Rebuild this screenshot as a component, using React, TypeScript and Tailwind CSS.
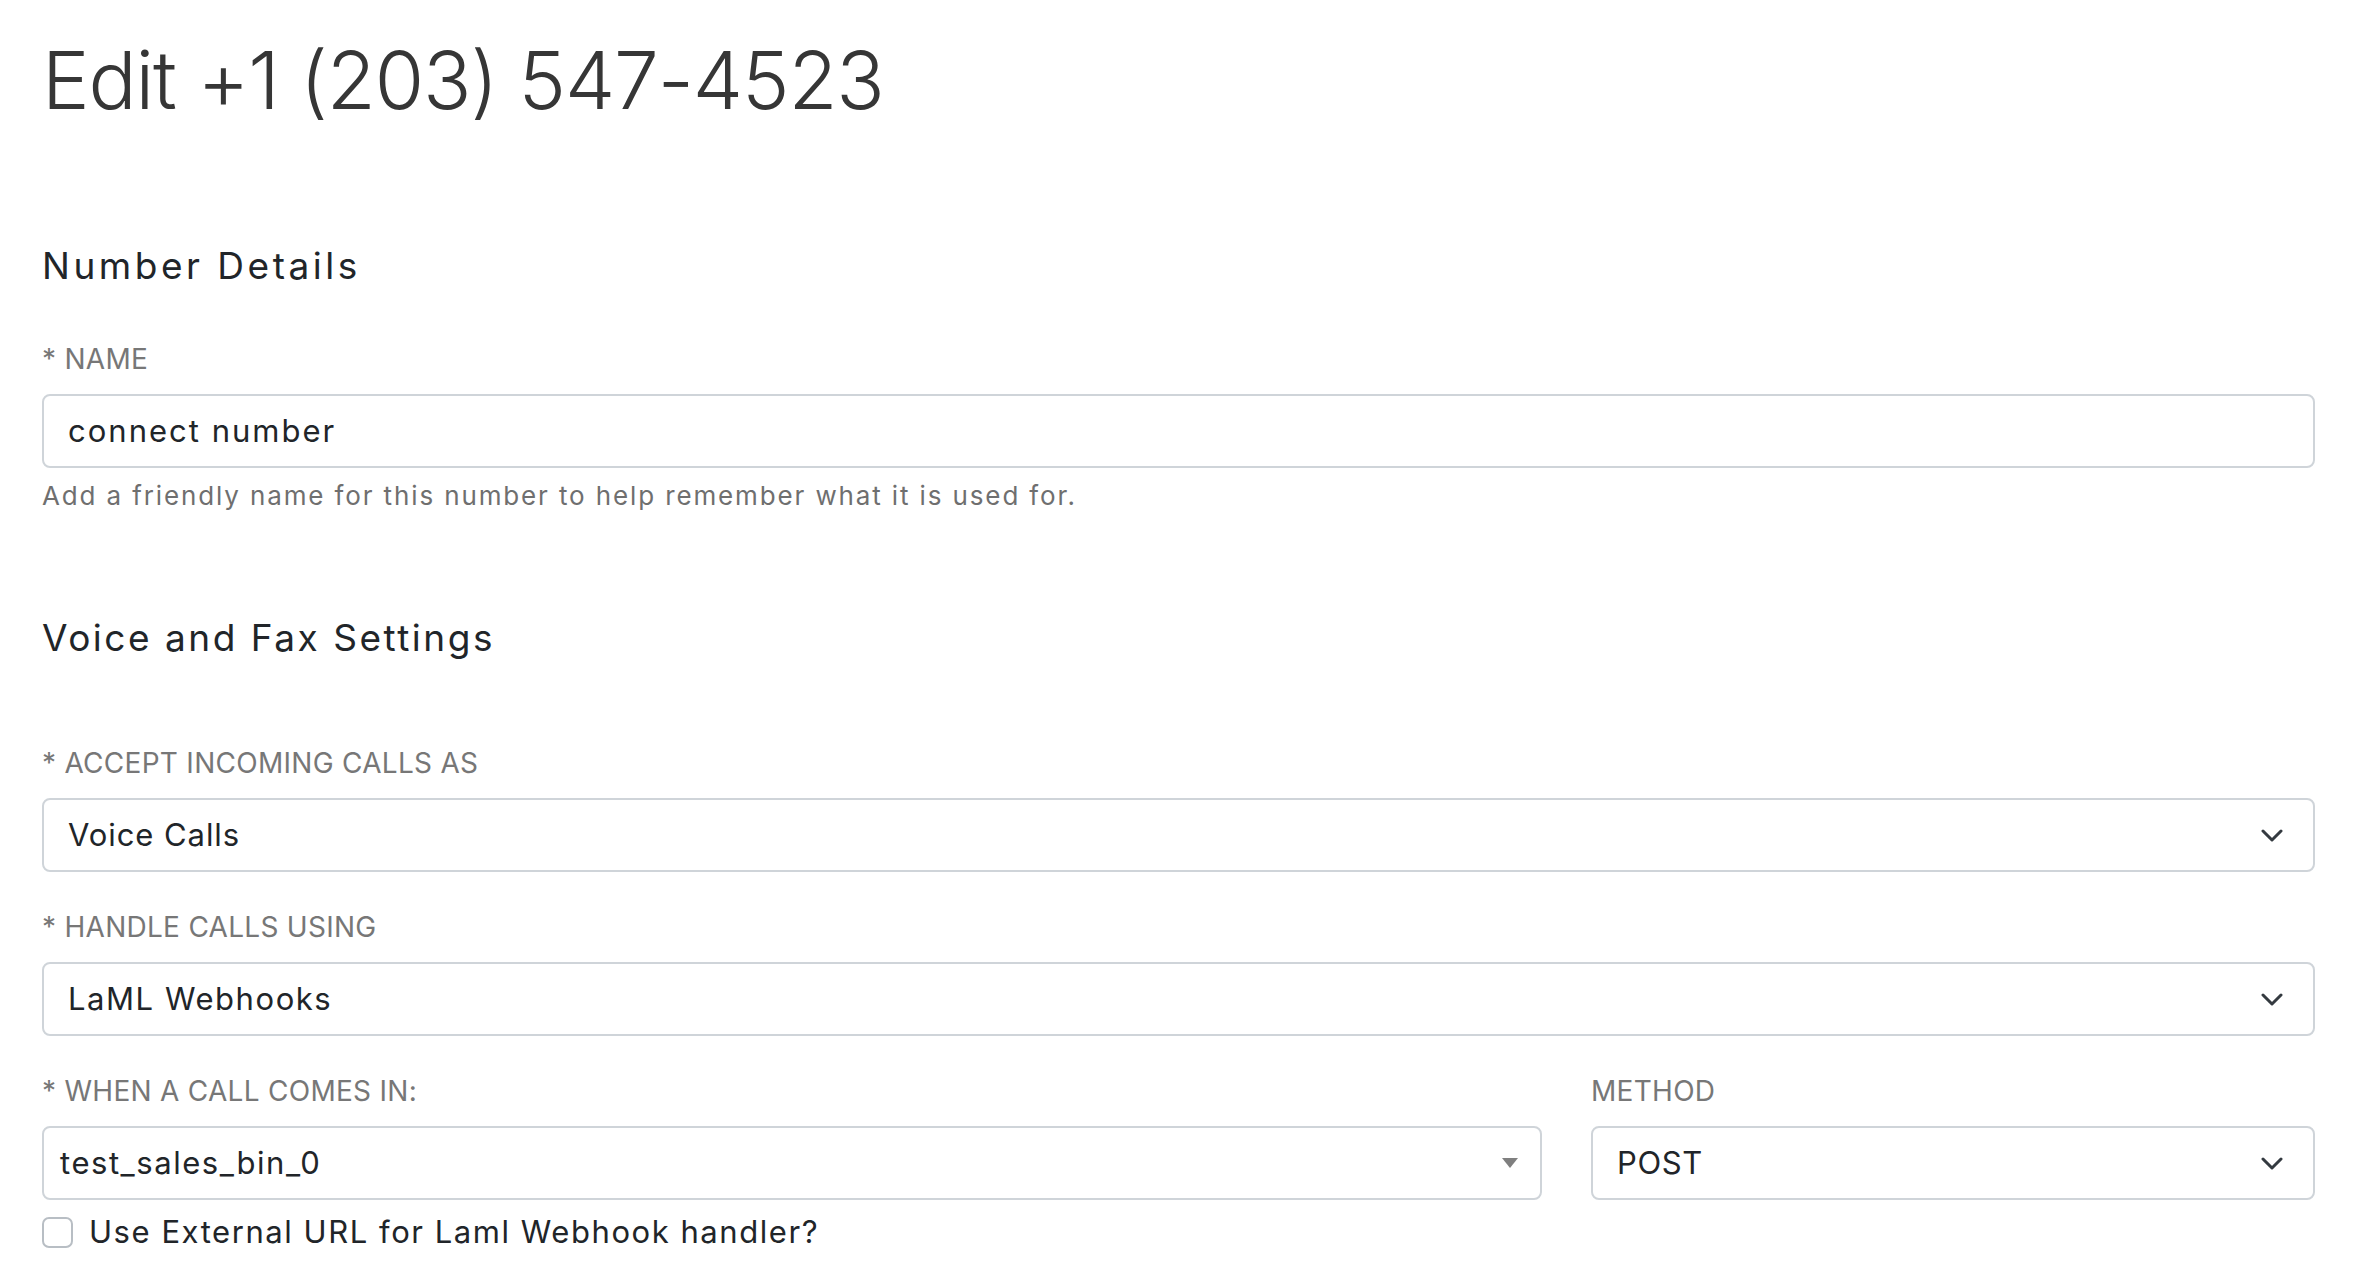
import React from 'react';

function Label({ children }: { children: React.ReactNode }) {
  return (
    <div className="mb-[18px] h-[34px] text-[28px] leading-[34px] uppercase tracking-[0.01em] text-[#777777]">
      {children}
    </div>
  );
}

function Chevron() {
  return (
    <svg width="22" height="13" viewBox="0 0 22 13" fill="none" className="shrink-0">
      <path d="M2 2l9 9 9-9" stroke="#343a40" strokeWidth="3" strokeLinecap="round" strokeLinejoin="round" />
    </svg>
  );
}

function Caret() {
  return (
    <svg width="16" height="10" viewBox="0 0 16 10" className="shrink-0">
      <path d="M0 0h16L8 10z" fill="#7f7f7f" />
    </svg>
  );
}

const field =
  'flex h-[74px] items-center justify-between rounded-[8px] border-2 border-[#cfd4d9] bg-white text-[31px] tracking-[0.05em] text-[#212529]';

export default function App() {
  return (
    <div className="min-h-screen bg-white pl-[42px] pr-[43px] pt-[32px] font-[Inter,'Open_Sans',sans-serif]">
      {/* Page title */}
      <h1 className="text-[80px] font-light leading-[96px] tracking-[-0.014em] text-[#363636]">
        Edit +1 (203) 547-4523
      </h1>

      {/* Number details */}
      <h2 className="mt-[116px] text-[37px] leading-[44px] tracking-[0.095em] text-[#212529]">Number Details</h2>

      <div className="mt-[54px]">
        <Label>* Name</Label>
        <div className={`${field} pl-[24px]`}>
          <span className="tracking-[0.065em]">connect number</span>
        </div>
      </div>
      <p className="mt-[12px] text-[26px] leading-[32px] tracking-[0.072em] text-[#6f6f6f]">
        Add a friendly name for this number to help remember what it is used for.
      </p>

      {/* Voice and fax */}
      <h2 className="mt-[104px] text-[37px] leading-[44px] tracking-[0.068em] text-[#212529]">
        Voice and Fax Settings
      </h2>

      <div className="mt-[86px]">
        <Label>* Accept incoming calls as</Label>
        <div className={`${field} pl-[24px] pr-[30px]`}>
          <span className="tracking-[0.03em]">Voice Calls</span>
          <Chevron />
        </div>
      </div>

      <div className="mt-[38px]">
        <Label>* Handle calls using</Label>
        <div className={`${field} pl-[24px] pr-[30px]`}>
          <span>LaML Webhooks</span>
          <Chevron />
        </div>
      </div>

      <div className="mt-[38px] grid grid-cols-[minmax(0,1fr)_724px] gap-x-[49px]">
        <div>
          <Label>* When a call comes in:</Label>
          <div className={`${field} pl-[16px] pr-[22px]`}>
            <span>test_sales_bin_0</span>
            <Caret />
          </div>
        </div>
        <div>
          <Label>Method</Label>
          <div className={`${field} pl-[24px] pr-[30px]`}>
            <span className="tracking-[0.02em]">POST</span>
            <Chevron />
          </div>
        </div>
      </div>

      <label className="mt-[15px] flex h-[34px] items-center">
        <span className="h-[31px] w-[31px] shrink-0 rounded-[7px] border-2 border-[#b8bec4] bg-white" />
        <span className="ml-[16px] text-[31px] leading-[34px] tracking-[0.05em] text-[#212529]">
          Use External URL for Laml Webhook handler?
        </span>
      </label>
    </div>
  );
}
